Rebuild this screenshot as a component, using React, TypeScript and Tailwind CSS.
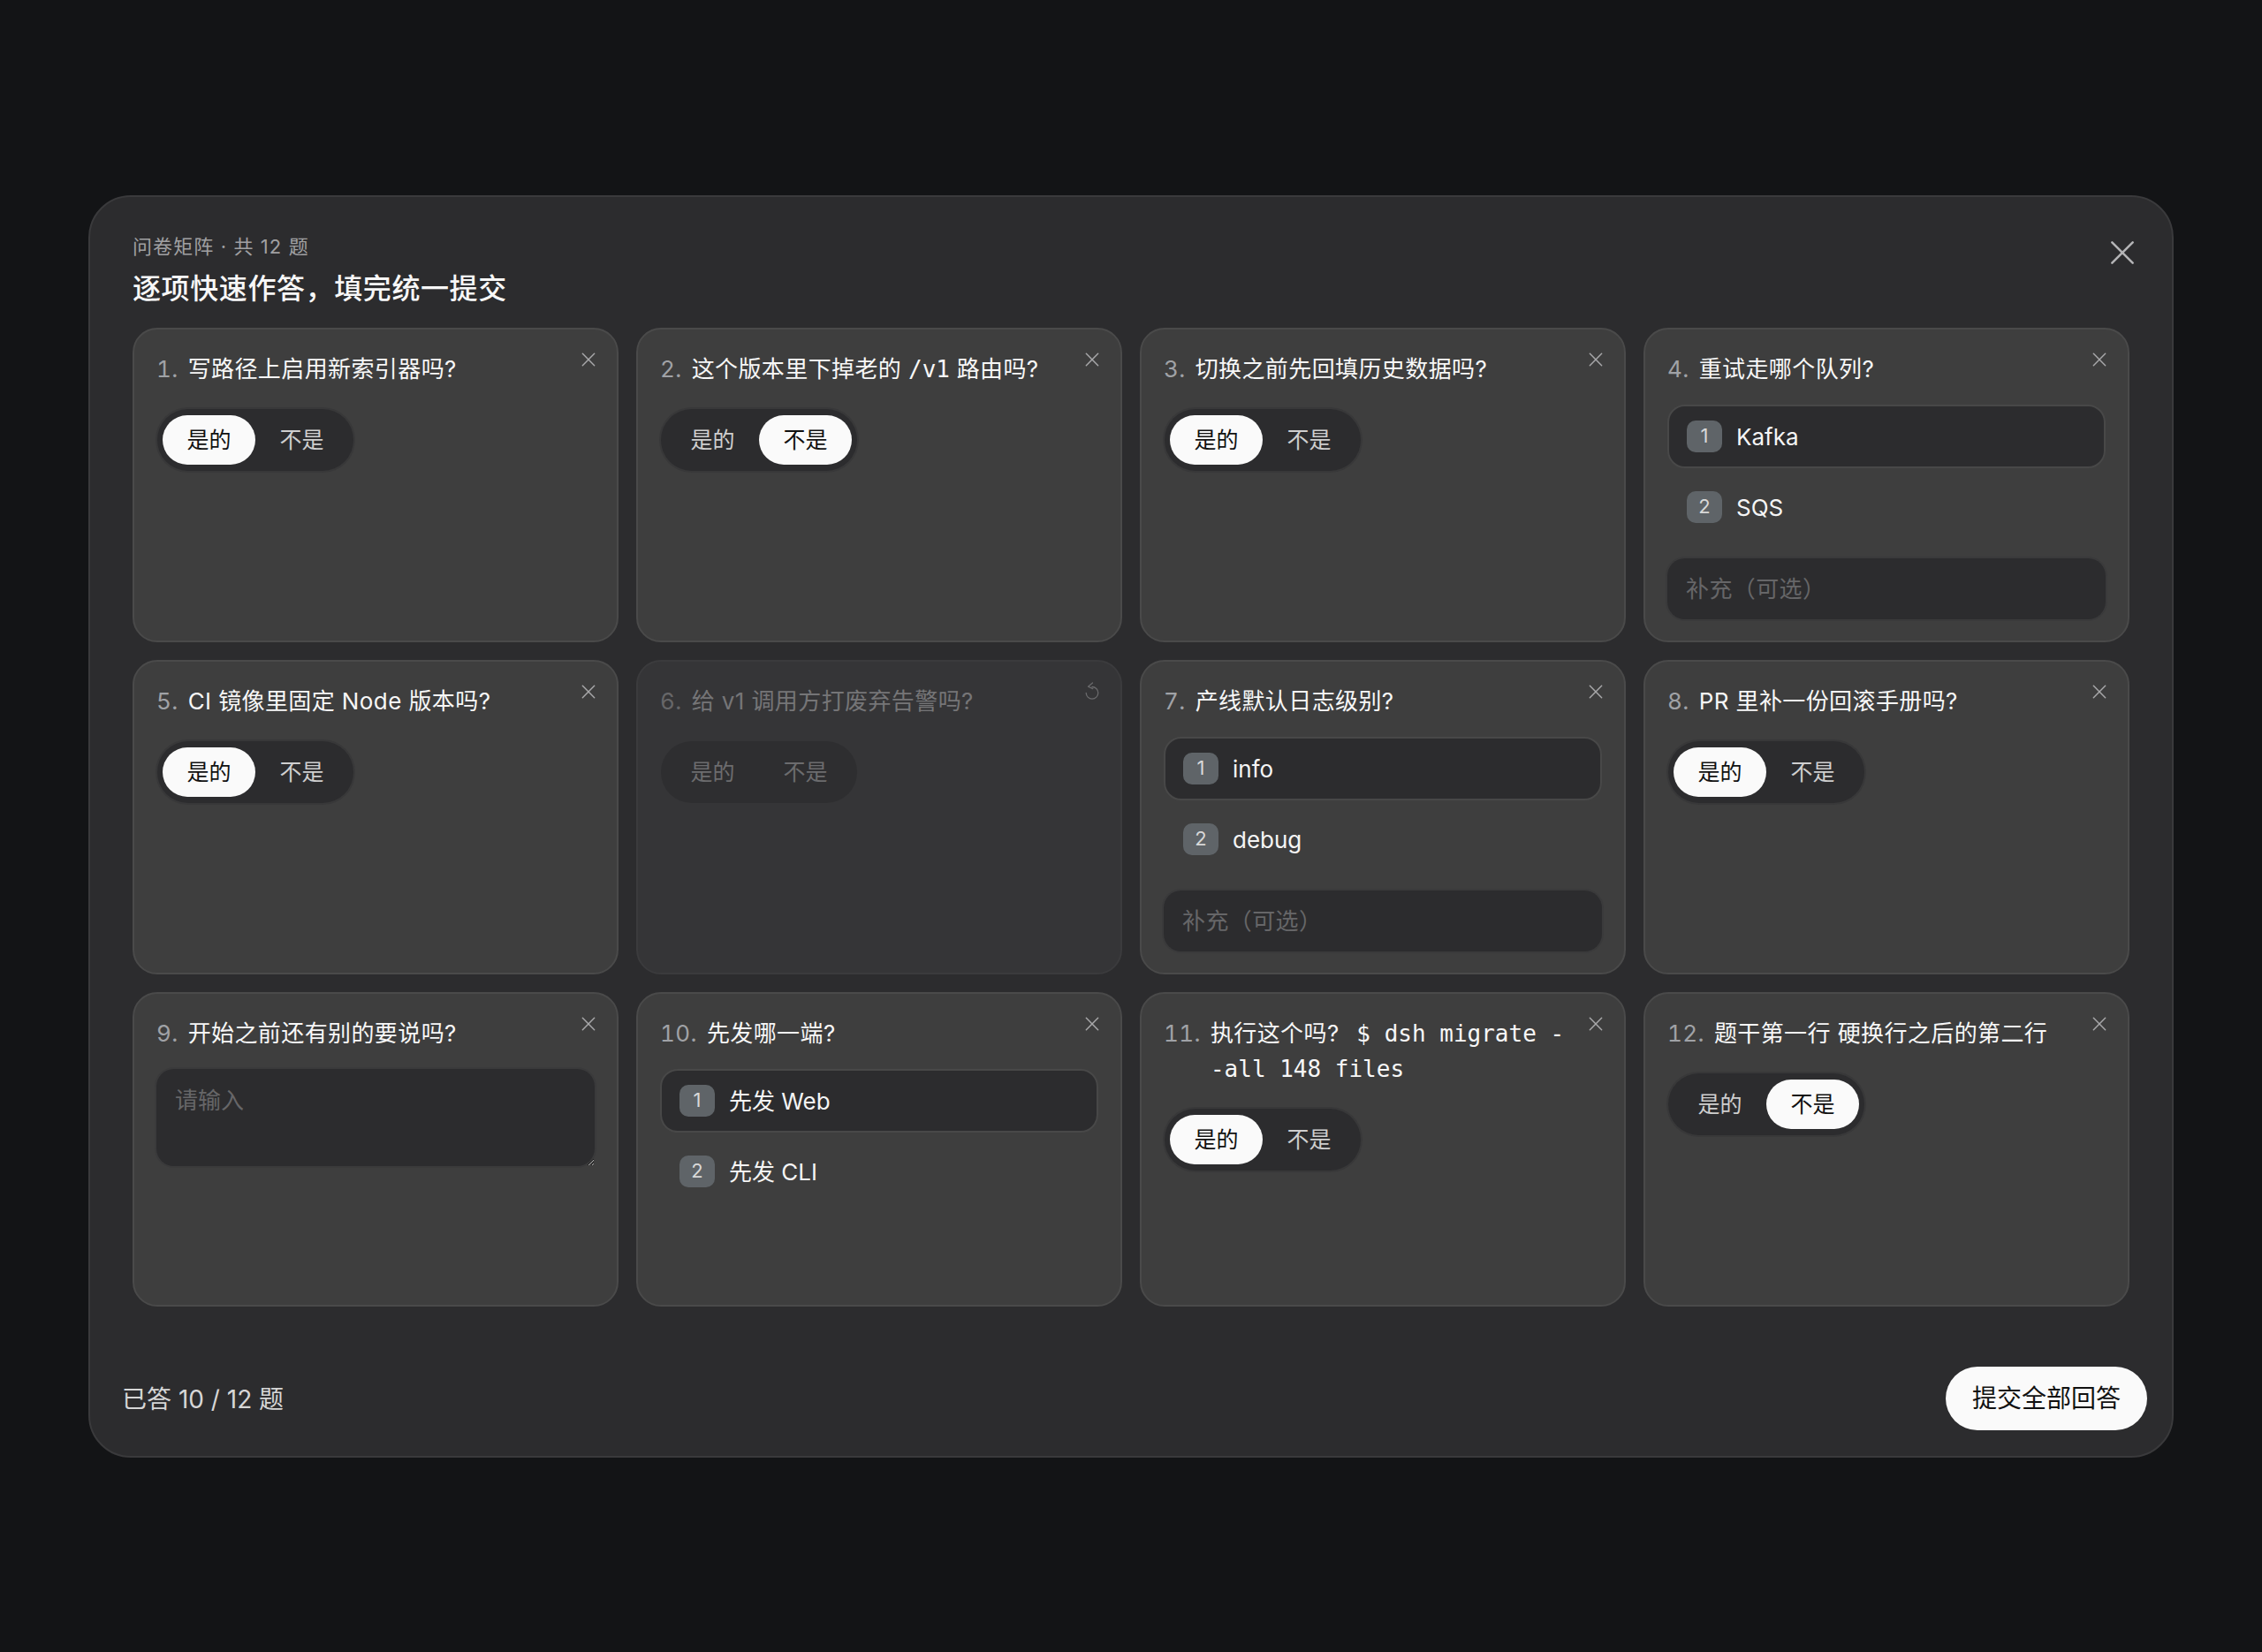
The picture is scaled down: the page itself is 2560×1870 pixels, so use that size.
import React from "react";

type Question = {
  no: number;
  title: React.ReactNode;
  kind: "toggle" | "choice" | "text";
  value?: "yes" | "no";
  options?: string[];
  muted?: boolean;
};

const questions: Question[] = [
  { no: 1, title: "写路径上启用新索引器吗?", kind: "toggle", value: "yes" },
  {
    no: 2,
    title: (
      <>
        这个版本里下掉老的 <code className="font-['DejaVu_Sans_Mono',monospace] text-[26px] tracking-normal">/v1</code> 路由吗?
      </>
    ),
    kind: "toggle",
    value: "no",
  },
  { no: 3, title: "切换之前先回填历史数据吗?", kind: "toggle", value: "yes" },
  { no: 4, title: "重试走哪个队列?", kind: "choice", options: ["Kafka", "SQS"] },
  { no: 5, title: "CI 镜像里固定 Node 版本吗?", kind: "toggle", value: "yes" },
  { no: 6, title: "给 v1 调用方打废弃告警吗?", kind: "toggle", muted: true },
  { no: 7, title: "产线默认日志级别?", kind: "choice", options: ["info", "debug"] },
  { no: 8, title: "PR 里补一份回滚手册吗?", kind: "toggle", value: "yes" },
  { no: 9, title: "开始之前还有别的要说吗?", kind: "text" },
  { no: 10, title: "先发哪一端?", kind: "choice", options: ["先发 Web", "先发 CLI"] },
  {
    no: 11,
    title: (
      <>
        执行这个吗? <code className="ml-[12px] font-['DejaVu_Sans_Mono',monospace] text-[26px] tracking-normal break-all">$ dsh migrate --all 148 files</code>
      </>
    ),
    kind: "toggle",
    value: "yes",
  },
  { no: 12, title: "题干第一行 硬换行之后的第二行", kind: "toggle", value: "no" },
];

function CloseIcon({ className }: { className: string }) {
  return (
    <svg viewBox="0 0 24 24" fill="none" stroke="currentColor" strokeLinecap="round" className={className}>
      <path d="M2 2L22 22M22 2L2 22" strokeWidth="2.2" />
    </svg>
  );
}

function ResetIcon({ className }: { className: string }) {
  return (
    <svg viewBox="0 0 16 20" fill="none" stroke="currentColor" strokeWidth="1.3" strokeLinecap="round" strokeLinejoin="round" className={className}>
      <path d="M8 5.5a6.8 6.8 0 1 1-6.8 6.8" />
      <path d="M8.5 1L3.5 5.2L8.8 7.6" />
    </svg>
  );
}

function Toggle({ value, muted }: { value?: "yes" | "no"; muted?: boolean }) {
  const item = (label: string, on: boolean) => (
    <button
      className={
        on
          ? "w-[105px] h-[56px] pt-[2px] rounded-full bg-[#fafafa] text-[#111] text-[25px]"
          : muted
            ? "w-[105px] h-[56px] pt-[2px] rounded-full text-[#6c6c6e] text-[25px]"
            : "w-[105px] h-[56px] pt-[2px] rounded-full text-[#cfcfcf] text-[25px]"
      }
    >
      {label}
    </button>
  );
  return (
    <div
      className={
        muted
          ? "mt-[25px] ml-[1px] flex w-[222px] h-[70px] items-center justify-center rounded-full bg-[#2e2e30]"
          : "mt-[25px] ml-[1px] flex w-[222px] h-[70px] items-center justify-center rounded-full bg-[#2c2c2e] ring-2 ring-[#383839]"
      }
    >
      {item("是的", value === "yes")}
      {item("不是", value === "no")}
    </div>
  );
}

function Choice({ options }: { options: string[] }) {
  return (
    <div className="mt-[20px] flex flex-col gap-[8px]">
      {options.map((opt, i) => (
        <div
          key={opt}
          className={
            i === 0
              ? "flex h-[72px] items-center gap-[16px] rounded-[20px] border-2 border-[#484848] bg-[#2c2c2e] px-[20px] text-[26px] text-[#f5f5f5]"
              : "flex h-[72px] items-center gap-[16px] rounded-[20px] border-2 border-transparent px-[20px] text-[26px] text-[#f5f5f5]"
          }
        >
          <span className="flex h-[36px] w-[40px] items-center justify-center rounded-[10px] bg-[#5f6468] text-[22px] text-[#d8d8d8]">
            {i + 1}
          </span>
          <span className="pt-[2px]">{opt}</span>
        </div>
      ))}
    </div>
  );
}

function Card({ q }: { q: Question }) {
  return (
    <div
      className={
        q.muted
          ? "relative h-[356px] rounded-[28px] border-2 border-[#3b3b3d] bg-[#353537] px-[25px] pt-[25px]"
          : "relative h-[356px] rounded-[28px] border-2 border-[#4a4a4a] bg-[#3e3e3e] px-[25px] pt-[25px]"
      }
    >
      {q.muted ? (
        <ResetIcon className="absolute right-[24px] top-[23px] h-[20px] w-[16px] text-[#6a6a6c]" />
      ) : (
        <CloseIcon className="absolute right-[24px] top-[26px] h-[16px] w-[16px] text-[#a8a8aa]" />
      )}
      <div className="flex gap-[11px] pr-[36px] text-[26px] leading-[40px] tracking-[0.4px]">
        <span className={q.muted ? "tabular-nums text-[#666668]" : "tabular-nums text-[#a0a2a6]"}>{q.no}.</span>
        <div className={q.muted ? "min-w-0 text-[#757577]" : "min-w-0 text-[#f7f7f7]"}>{q.title}</div>
      </div>
      {q.kind === "toggle" && <Toggle value={q.value} muted={q.muted} />}
      {q.kind === "choice" && (
        <>
          <Choice options={q.options ?? []} />
          {q.no !== 10 && (
            <input
              placeholder="补充（可选）"
              className="mt-[22px] h-[69px] w-full rounded-[20px] bg-[#2c2c2e] px-[21px] text-[26px] tracking-[0.4px] outline-none ring-2 ring-[#3a3a3b] placeholder:text-[#666668]"
            />
          )}
        </>
      )}
      {q.kind === "text" && (
        <textarea
          placeholder="请输入"
          className="mt-[20px] block h-[110px] w-full rounded-[20px] bg-[#2c2c2e] px-[21px] py-[16px] text-[26px] leading-[39px] outline-none ring-2 ring-[#3a3a3b] placeholder:text-[#666668]"
        />
      )}
    </div>
  );
}

export default function App() {
  return (
    <div className="flex min-h-screen items-center justify-center bg-[#131416] font-['Inter','Noto_Sans_CJK_SC',sans-serif]">
      <div className="relative flex h-[1429px] w-[2360px] flex-col rounded-[48px] border-2 border-[#3a3a3c] bg-[#2c2c2e] px-[48px] pt-[40px]">
        <CloseIcon className="absolute right-[42px] top-[49px] h-[28px] w-[28px] text-[#b4b4b6]" />
        <p className="text-[22px] leading-[32px] tracking-[1.1px] text-[#a0a0a2]">问卷矩阵 · 共 12 题</p>
        <h2 className="mt-[8px] text-[32px] font-medium leading-[48px] tracking-[0.6px] text-[#f7f7f7]">逐项快速作答，填完统一提交</h2>
        <div className="mt-[20px] grid grid-cols-4 gap-[20px]">
          {questions.map((q) => (
            <Card key={q.no} q={q} />
          ))}
        </div>
        <div className="mt-[68px] -ml-[12px] -mr-[20px] flex items-center justify-between">
          <span className="pt-[2px] text-[28px] text-[#d6d6d6]">已答 10 / 12 题</span>
          <button className="h-[72px] w-[228px] rounded-full bg-[#fafafa] text-[28px] text-[#111]">提交全部回答</button>
        </div>
      </div>
    </div>
  );
}
